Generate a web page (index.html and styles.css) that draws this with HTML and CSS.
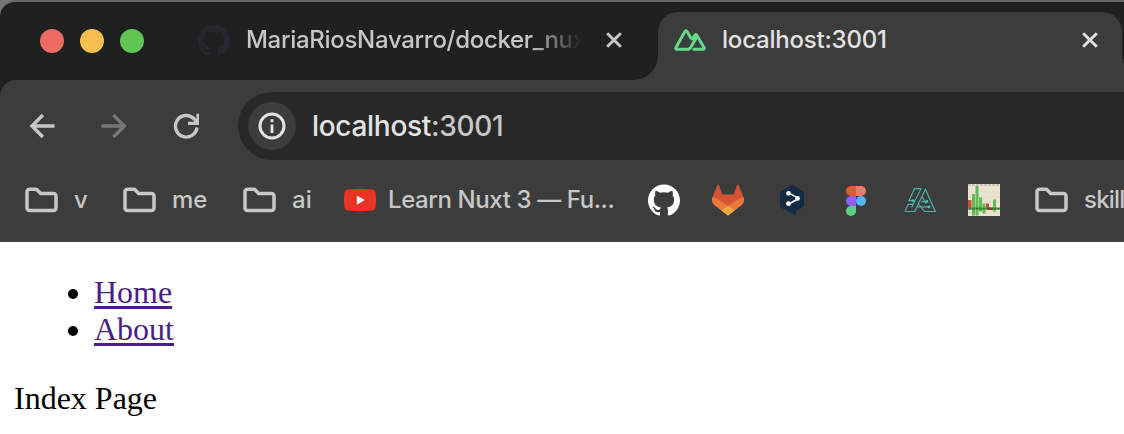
FILE: index.html
```html
<!DOCTYPE html>
<html lang="en">
<head>
<meta charset="utf-8">
<title>localhost:3001</title>
<link rel="stylesheet" href="styles.css">
</head>
<body>
<svg class="defs" aria-hidden="true">
  <symbol id="github" viewBox="0 0 24 24"><path d="M12 .297c-6.63 0-12 5.373-12 12 0 5.303 3.438 9.8 8.205 11.385.6.113.82-.258.82-.577 0-.285-.01-1.04-.015-2.04-3.338.724-4.042-1.61-4.042-1.61C4.422 18.07 3.633 17.7 3.633 17.7c-1.087-.744.084-.729.084-.729 1.205.084 1.838 1.236 1.838 1.236 1.07 1.835 2.809 1.305 3.495.998.108-.776.417-1.305.76-1.605-2.665-.3-5.466-1.332-5.466-5.93 0-1.31.465-2.38 1.235-3.22-.135-.303-.54-1.523.105-3.176 0 0 1.005-.322 3.3 1.23.96-.267 1.98-.399 3-.405 1.02.006 2.04.138 3 .405 2.28-1.552 3.285-1.23 3.285-1.23.645 1.653.24 2.873.12 3.176.765.84 1.23 1.91 1.23 3.22 0 4.61-2.805 5.625-5.475 5.92.42.36.81 1.096.81 2.22 0 1.606-.015 2.896-.015 3.286 0 .315.21.69.825.57C20.565 22.092 24 17.592 24 12.297c0-6.627-5.373-12-12-12" fill="currentColor"/></symbol>
  <symbol id="folder" viewBox="0 0 35 26"><path d="M5.500 2.300H12.500L16.700 6.500H29.500a2.500 2.500 0 0 1 2.500 2.500V21a2.500 2.500 0 0 1-2.500 2.500H5.500A2.500 2.500 0 0 1 3 21V4.800A2.500 2.500 0 0 1 5.500 2.300Z" fill="none" stroke="currentColor" stroke-width="3.500" stroke-linejoin="round"/></symbol>
  <symbol id="close" viewBox="0 0 16 16"><path d="M1.200 1.200 14.800 14.800M14.800 1.200 1.200 14.800" stroke="currentColor" stroke-width="2.900" fill="none"/></symbol>
</svg>
<div class="window">
  <header class="tabs">
    <div class="lights"><i class="light red"></i><i class="light yellow"></i><i class="light green"></i></div>
    <div class="tab">
      <svg class="favicon dim"><use href="#github"/></svg>
      <span class="tab-title faded">MariaRiosNavarro/docker_nux</span>
      <svg class="close"><use href="#close"/></svg>
    </div>
    <div class="tab active">
      <svg class="favicon" viewBox="0 0 32 32"><g fill="none" stroke="#64d98a" stroke-width="3" stroke-linejoin="round" stroke-linecap="round"><path d="M14 25.300H3.200Q1.300 25.300 2 23.400L10.800 7.800Q12 5.800 13.200 7.800L16.800 14"/><path d="M14 25.300C16.300 25.300 17.200 23 18.600 20.300L22.500 13.500"/><path d="M20 25.300H28.600Q31 25.300 30 23.400L22.800 11.300Q21.800 9.700 20.600 11.400L18.500 15"/></g></svg>
      <span class="tab-title host">localhost:3001</span>
      <svg class="close"><use href="#close"/></svg>
    </div>
  </header>
  <div class="chrome">
    <div class="toolbar">
      <svg class="nav" viewBox="0 0 26 26"><path d="M25.500 13H3.800M13.900 2 2.900 13l11 11" fill="none" stroke="#c7c7c7" stroke-width="3.300"/></svg>
      <svg class="nav" viewBox="0 0 26 26"><path d="M.500 13H22.500M12.400 2l11 11-11 11" fill="none" stroke="#777" stroke-width="3.300"/></svg>
      <svg class="nav" viewBox="0 0 26 26"><path d="M24 14.500A10.800 10.800 0 1 1 20.800 5.500L23.800 8.800M25.200.700V10.400H15" fill="none" stroke="#c7c7c7" stroke-width="3.400"/></svg>
      <div class="omnibox">
        <span class="info"><svg viewBox="0 0 28 28"><circle cx="14" cy="14" r="12" fill="none" stroke="#e3e3e3" stroke-width="3"/><path d="M14 12.600V21M14 7.200v3" stroke="#e3e3e3" stroke-width="2.800"/></svg></span>
        <span class="url">localhost<span class="port">:3001</span></span>
      </div>
    </div>
    <nav class="bookmarks">
      <a class="bm"><svg class="folder"><use href="#folder"/></svg><span>v</span></a>
      <a class="bm"><svg class="folder"><use href="#folder"/></svg><span>me</span></a>
      <a class="bm"><svg class="folder"><use href="#folder"/></svg><span>ai</span></a>
      <a class="bm video"><svg class="icon" viewBox="0 0 32 32"><path d="M4.500 5.300Q16 4.400 27.500 5.300Q31 5.500 31.600 9Q32.300 16 31.600 23Q31 26.500 27.500 26.700Q16 27.600 4.500 26.700Q1 26.500.4 23Q-.3 16 .4 9Q1 5.500 4.500 5.300Z" fill="#ea3323"/><path d="m12.800 11.500 8 4.500-8 4.700Z" fill="#fff"/></svg><span class="learn">Learn Nuxt 3 — Fu...</span></a>
      <a class="bm"><svg class="icon white"><use href="#github"/></svg></a>
      <a class="bm"><svg class="icon" viewBox="0 0 32 32"><path d="m16 31.400-13.700-10.500Q-.8 18 .3 13.600L5.300 1.200Q6.200-.2 7 1.200L10.300 10.500H21.700L25 1.200Q26 -.2 26.700 1.200L31.700 13.600Q32.800 18 29.700 20.900Z" fill="#d65235"/><path d="M.3 13.600Q6 14.400 10.200 18L16 22.300 21.800 18Q26 14.400 31.700 13.600 32.800 18 29.700 20.900L16 31.400 2.300 20.900Q-.8 18 .3 13.600Z" fill="#ec7a3c"/><path d="M9.400 26.400 16 21.800l6.600 4.600L16 31.400Z" fill="#f2a842"/></svg></a>
      <a class="bm"><svg class="icon" viewBox="0 0 32 32"><path d="M16 .8 28 7.700V22.500L20 27V31L14 28.800 4 22.700V7.700Z" fill="#142b46"/><path d="M13 9.200 22.700 14.400 13 20" fill="none" stroke="#fff" stroke-width="1.500"/><g fill="#fff"><circle cx="12.500" cy="9.300" r="2.400"/><circle cx="21.500" cy="14.400" r="2.400"/><circle cx="12.500" cy="19.700" r="2.400"/></g></svg></a>
      <a class="bm"><svg class="icon" viewBox="0 0 32 32"><path d="M16 2h-5a5 5 0 0 0 0 10h5Z" fill="#e15a31"/><path d="M16 2h5a5 5 0 0 1 0 10h-5Z" fill="#ef796a"/><path d="M16 12h-5a5 5 0 0 0 0 10h5Z" fill="#975cf6"/><circle cx="21" cy="17" r="5" fill="#55b6f9"/><path d="M16 22h-5a5 5 0 1 0 5 5Z" fill="#5fce86"/></svg></a>
      <a class="bm"><svg class="icon" viewBox="0 0 32 32"><g fill="none" stroke="#4ab0a8" stroke-width="1.200"><path d="M8 16.600H4.900L10.600 4.700H17L7.600 23.500"/><path d="M.9 27.500 4.200 20.300H9.200M.9 27.500H10.800L21.400 5.200 31.300 27.500H20.500L15 20.500"/><path d="M18 12.500 22 19.500M13.500 22.800H24.500M17.500 17.600H22.500"/></g><g fill="#4fc0b8"><circle cx="9" cy="16.600" r="1.400"/><circle cx="22.800" cy="17.500" r="1.400"/><circle cx="25" cy="23" r="1.400"/></g></svg></a>
      <a class="bm"><svg class="icon" viewBox="0 0 32 32"><path d="M0 0h32v32H0z" fill="#ebe3d2"/><path d="M0 1h32" stroke="#bdb9a9" stroke-width="1.500" stroke-dasharray="3 1"/><path d="M0 8H32M0 13H32M0 18H32M0 29H32" stroke="#ddd5c2" stroke-width=".7"/><path d="M4 10H7V31.500H4ZM7.500 2H10.500V31.500H7.500ZM11 13.500H14V27.500H11ZM14.500 19.500H17.500V29.500H14.500ZM25 15.500H28V27.500H25Z" fill="#62bc56"/><path d="M0 16H3.500V24H0ZM18 19.500H21V24H25V26H18Z" fill="#c9503d"/><path d="M0 24.600H32" stroke="#327b32" stroke-width="2"/><path d="M0 24.600H32" stroke="#69a553" stroke-width="2" stroke-dasharray="1 2.500"/><path d="M20 24.600H25" stroke="#85372b" stroke-width="2"/></svg></a>
      <a class="bm"><svg class="folder"><use href="#folder"/></svg><span class="last">skill</span></a>
    </nav>
  </div>
  <main class="page">
    <ul class="links"><li><a href="#">Home</a></li><li><a href="#">About</a></li></ul>
    <p class="heading">Index Page</p>
  </main>
</div>
</body>
</html>
```

FILE: styles.css
```css
* { box-sizing: border-box; }
body { margin: 0; overflow: hidden; background: #1f2121; font-family: Inter, "Liberation Sans", sans-serif; }
svg { display: block; flex: none; }
.defs { position: absolute; width: 0; height: 0; }
.window { width: 1124px; height: 434px; overflow: hidden; display: flex; flex-direction: column; }
.tabs { height: 80px; flex: none; display: flex; background: #1f2121; border-top: 2px solid #686a6a; border-top-left-radius: 16px; box-shadow: -8px -8px 0 #777; }
.lights { display: flex; gap: 16px; padding: 27px 0 0 40px; width: 198px; flex: none; }
.light { width: 24px; height: 24px; border-radius: 50%; }
.red { background: #ed6b60; }
.yellow { background: #f5bf4f; }
.green { background: #61c554; }
.tab { display: flex; width: 460px; flex: none; height: 56px; margin-top: 10px; align-items: center; color: #c7c7c7; font-size: 24px; font-weight: 450; }
.favicon { width: 32px; height: 32px; margin-right: 16px; }
.dim { color: #24272d; }
.tab-title { width: 336px; overflow: hidden; white-space: nowrap; line-height: 34px; }
.faded { letter-spacing: -0.3px; mask-image: linear-gradient(90deg, #000 284px, transparent 336px); }
.host { letter-spacing: -0.2px; }
.close { width: 16px; height: 16px; margin-left: 24px; }
.active { position: relative; width: 464px; height: 68px; padding: 0 0 12px 16px; border-radius: 20px 20px 0 0; background: #3c3c3c; color: #e3e3e3; }
.active::before, .active::after { content: ""; position: absolute; bottom: 0; width: 24px; height: 24px; }
.active::before { left: -24px; background: radial-gradient(circle at 0 0, transparent 23.5px, #3c3c3c 24px); }
.active::after { right: -24px; background: radial-gradient(circle at 100% 0, transparent 23.5px, #3c3c3c 24px); }
.chrome { height: 162px; flex: none; background: #3c3c3c; border-top-left-radius: 16px; border-bottom: 1px solid #484646; }
.toolbar { display: flex; align-items: center; height: 92px; padding-left: 29px; }
.nav { width: 26px; height: 26px; margin-right: 46px; }
.nav + .nav + .nav { margin-right: 39px; }
.omnibox { flex: 1; height: 68px; display: flex; align-items: center; gap: 16px; padding-left: 10px; background: #282828; border-radius: 34px 0 0 34px; }
.info { width: 48px; height: 48px; display: grid; place-items: center; border-radius: 50%; background: #3c3c3c; }
.info svg { width: 28px; height: 28px; }
.url { font-size: 28px; font-weight: 450; letter-spacing: -0.3px; color: #e3e3e3; }
.port { color: #c7c7c7; }
.bookmarks { display: grid; grid-template-columns: 98px 120px 102px 304px 64px 64px 64px 64px 64px 66px 1fr; height: 56px; padding-left: 24px; }
.bm { display: flex; align-items: center; gap: 15px; color: #c7c7c7; font-size: 24px; font-weight: 450; white-space: nowrap; }
.bm span { padding-bottom: 2px; }
.video { gap: 12px; }
.learn { letter-spacing: -0.4px; }
.last { letter-spacing: -0.8px; }
.folder { width: 35px; height: 26px; }
.icon { width: 32px; height: 32px; }
.white { color: #fff; }
.page { flex: 1; background: #fff; color: #000; padding: 32px 14px 0; font: 32px/37px "Liberation Serif", serif; }
.links { margin: 0; padding-left: 80px; }
.links a { color: #4b1e87; text-decoration-thickness: 3px; text-underline-offset: 3px; }
.heading { margin: 32px 0 0; }
```
